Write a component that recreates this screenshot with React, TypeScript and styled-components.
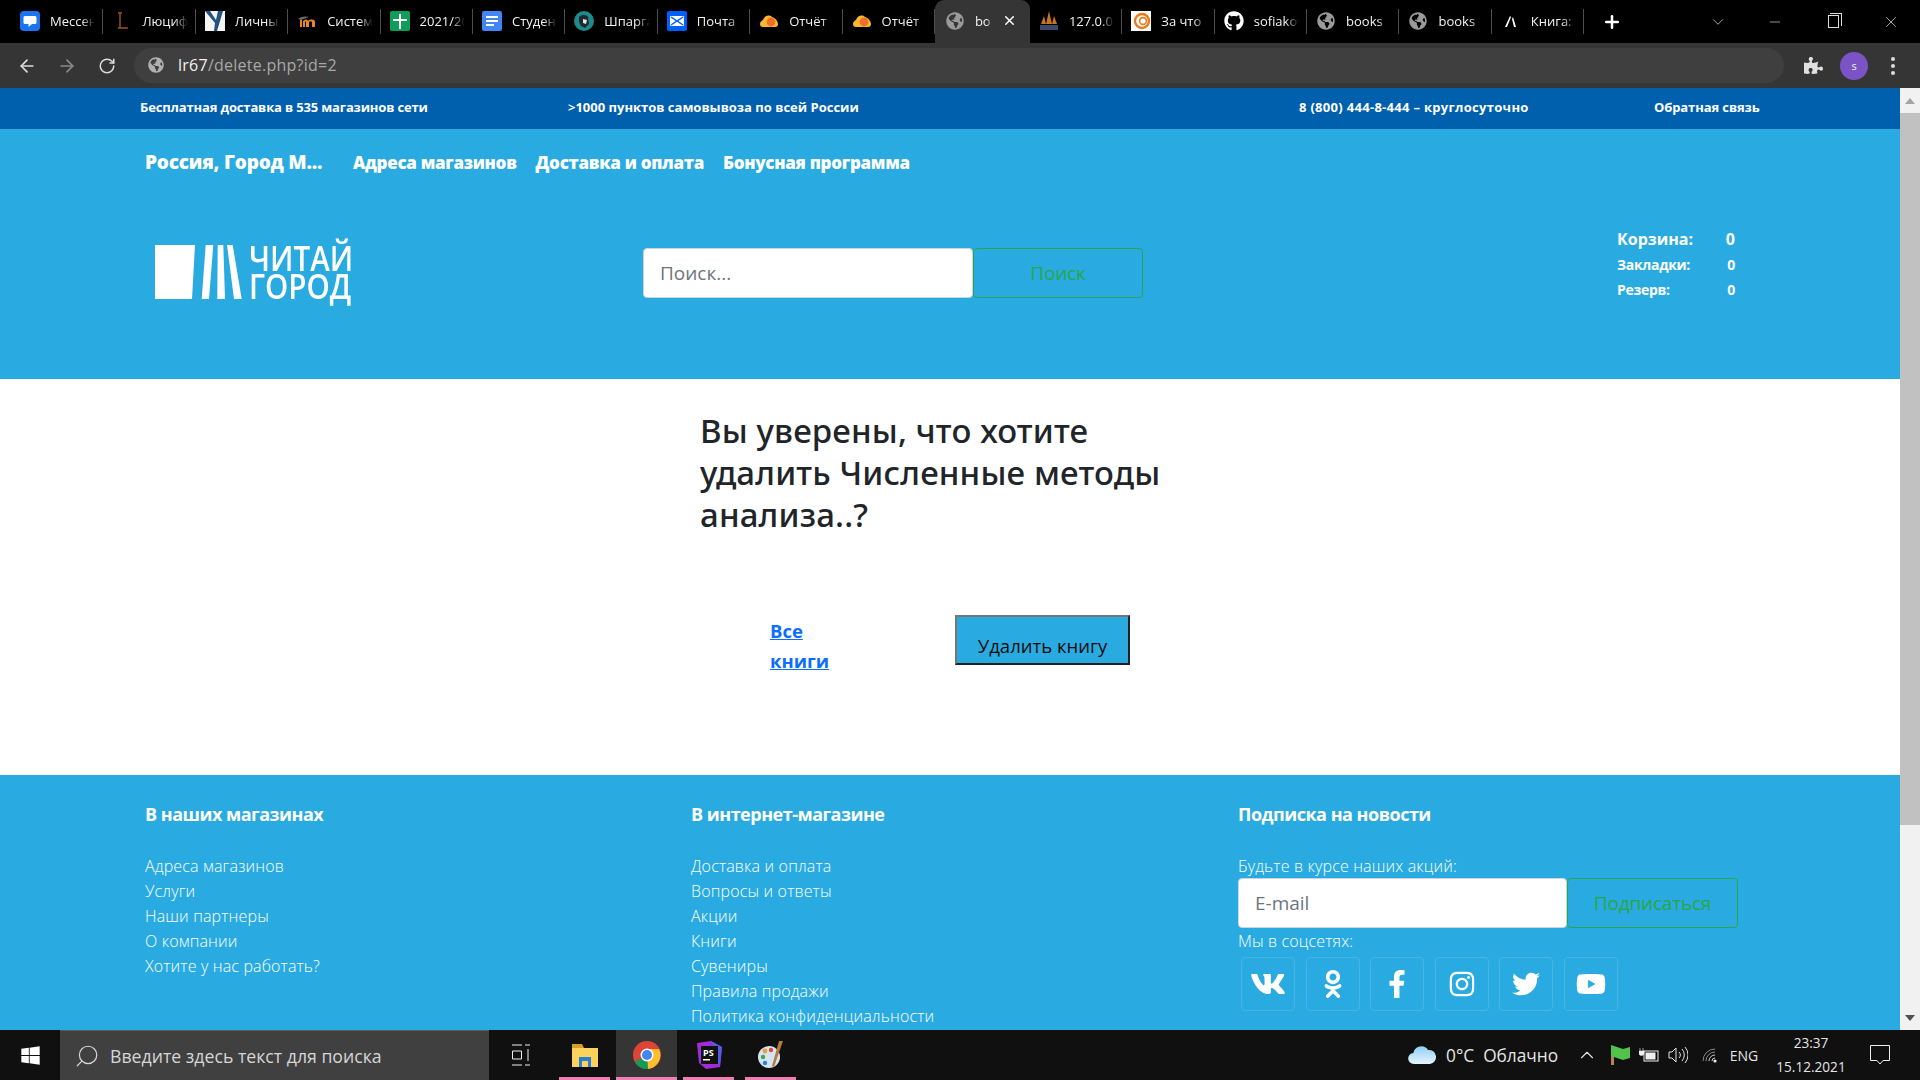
import React from 'react';
import styled, { createGlobalStyle } from 'styled-components';
import { FaVk, FaOdnoklassniki, FaFacebookF, FaInstagram, FaTwitter, FaYoutube, FaGithub, FaWindows, FaGlobeAmericas, FaPuzzlePiece } from 'react-icons/fa';
import { ArrowLeft, ArrowRight, RotateCw, Plus, X, ChevronDown, ChevronUp, Minus, Search } from 'lucide-react';

const GlobalStyle = createGlobalStyle`
  html, body { margin: 0; padding: 0; overflow: hidden; background: #fff; }
  * { box-sizing: border-box; }
  body { font-family: "Open Sans", "Noto Sans", sans-serif; }
`;

const Screen = styled.div`
  width: 1920px;
  height: 1080px;
  display: flex;
  flex-direction: column;
  overflow: hidden;
`;

/* chrome */
const TabStrip = styled.div`
  height: 43px;
  background: #000;
  display: flex;
  align-items: stretch;
  padding-left: 11px;
  color: #f2f2f2;
  flex: none;
`;

const Tab = styled.div<{ $active?: boolean }>`
  width: ${(p) => (p.$active ? '95px' : '92.4px')};
  display: flex;
  align-items: center;
  gap: 10px;
  padding: ${(p) => (p.$active ? '0 13px 2px 10px' : '0 8px 2px 9px')};
  font-size: 13px;
  background: ${(p) => (p.$active ? '#353535' : 'transparent')};
  border-radius: ${(p) => (p.$active ? '9px 9px 0 0' : '0')};
  position: relative;
  flex: none;
  &::after {
    content: '';
    display: ${(p) => (p.$active ? 'none' : 'block')};
    position: absolute;
    right: 0;
    top: 9px;
    bottom: 9px;
    width: 1px;
    background: #4d4d4d;
  }
`;

const TabIcon = styled.span`
  width: 20px;
  height: 20px;
  flex: none;
  display: flex;
  align-items: center;
  justify-content: center;
`;

const TabTitle = styled.span`
  flex: 1;
  white-space: nowrap;
  overflow: hidden;
  -webkit-mask-image: linear-gradient(90deg, #000 70%, transparent 100%);
  mask-image: linear-gradient(90deg, #000 70%, transparent 100%);
`;

const NewTab = styled.div`
  width: 56px;
  display: flex;
  align-items: center;
  justify-content: center;
  color: #fff;
  flex: none;
`;

const WindowControls = styled.div`
  margin-left: auto;
  display: flex;
  align-items: center;
  color: #ddd;
`;

const WindowButton = styled.div<{ $width: number }>`
  width: ${(p) => p.$width}px;
  display: flex;
  justify-content: center;
  align-items: center;
`;

const RestoreIcon = styled.div`
  width: 11px;
  height: 13px;
  border: 1px solid #ddd;
  position: relative;
  &::after {
    content: '';
    position: absolute;
    top: -3px;
    left: 1px;
    width: 11px;
    height: 12px;
    border: 1px solid #ddd;
    border-left: none;
    border-bottom: none;
  }
`;

const Toolbar = styled.div`
  height: 45px;
  background: #353535;
  display: flex;
  align-items: center;
  flex: none;
  padding-left: 7px;
  color: #dcdcdc;
`;

const NavButton = styled.div<{ $dim?: boolean }>`
  width: 40px;
  display: flex;
  justify-content: center;
  color: ${(p) => (p.$dim ? '#8a8a8a' : '#dcdcdc')};
`;

const AddressBar = styled.div`
  width: 1650px;
  height: 35px;
  margin-left: 7px;
  border-radius: 18px;
  background: #3f3f3f;
  display: flex;
  align-items: center;
  padding: 0 0 1px 14px;
  gap: 14px;
  font-size: 16px;
  letter-spacing: 0.25px;
  color: #a8a8a8;
  flex: none;
`;

const UrlHost = styled.span`
  color: #f0f0f0;
`;

const ToolbarEnd = styled.div`
  display: flex;
  align-items: center;
  margin-left: 20px;
`;

const Avatar = styled.div`
  width: 28px;
  height: 28px;
  border-radius: 50%;
  background: #7a54c4;
  color: #eee;
  font-size: 11px;
  display: flex;
  align-items: center;
  justify-content: center;
  margin-left: 17px;
`;

const Dots = styled.div`
  margin-left: 23px;
  width: 4px;
  display: flex;
  flex-direction: column;
  gap: 3px;
  span { width: 4px; height: 4px; border-radius: 50%; background: #ddd; }
`;

/* page */
const Viewport = styled.div`
  flex: 1;
  min-height: 0;
  display: flex;
`;

const Page = styled.div`
  width: 1900px;
  flex: none;
  overflow: hidden;
  display: flex;
  flex-direction: column;
`;

const Scrollbar = styled.div`
  width: 20px;
  background: #f1f1f1;
  display: flex;
  flex-direction: column;
  align-items: center;
`;

const ScrollArrow = styled.div<{ $down?: boolean }>`
  height: 25px;
  flex: none;
  display: flex;
  align-items: center;
  justify-content: center;
  &::before {
    content: '';
    border-left: 5px solid transparent;
    border-right: 5px solid transparent;
    ${(p) => (p.$down ? 'border-top: 6px solid #505050;' : 'border-bottom: 6px solid #a3a3a3;')}
  }
`;

const ScrollThumb = styled.div`
  width: 100%;
  height: 712px;
  background: #c1c1c1;
  flex: none;
`;

const ScrollTrack = styled.div`
  flex: 1;
`;

const PromoBar = styled.div`
  height: 41px;
  background: #0060ae;
  color: #fff;
  font-size: 13px;
  font-weight: 700;
  display: flex;
  align-items: center;
  padding: 0 0 4px 140px;
  flex: none;
`;

const PromoItem = styled.div<{ $width: number; $spacing: number }>`
  width: ${(p) => p.$width}px;
  letter-spacing: ${(p) => p.$spacing}px;
  flex: none;
  white-space: nowrap;
`;

const Header = styled.header`
  height: 250px;
  background: #29abe2;
  color: #fff;
  padding: 18px 0 0 145px;
  flex: none;
`;

const TopNav = styled.nav`
  display: flex;
  align-items: center;
  height: 30px;
  font-weight: 800;
  font-size: 17px;
  letter-spacing: -0.3px;
  white-space: nowrap;
`;

const City = styled.span`
  width: 208px;
  font-size: 19px;
  letter-spacing: -0.2px;
  flex: none;
`;

const TopLink = styled.a`
  color: #fff;
  margin-right: 19px;
`;

const HeaderRow = styled.div`
  display: flex;
  margin-top: 41px;
`;

const Logo = styled.div`
  width: 498px;
  margin-top: 26px;
  padding-left: 10px;
  display: flex;
  align-items: flex-start;
  gap: 7px;
  flex: none;
`;

const LogoBooks = styled.svg`
  width: 87px;
  height: 54px;
  margin-top: 1px;
  flex: none;
`;

const LogoText = styled.div`
  font-size: 34px;
  line-height: 28px;
  font-weight: 600;
  white-space: nowrap;
  transform: scaleX(0.87);
  transform-origin: left top;
`;

const SearchForm = styled.div`
  display: flex;
  margin-top: 30px;
  flex: none;
`;

const TextField = styled.input<{ $width: number }>`
  height: 50px;
  width: ${(p) => p.$width}px;
  border: 1px solid #ced4da;
  border-radius: 4px;
  padding: 0 16px;
  font-family: inherit;
  font-size: 19px;
  background: #fff;
  &::placeholder { color: #6c757d; opacity: 1; }
`;

const OutlineButton = styled.button<{ $width: number }>`
  height: 50px;
  width: ${(p) => p.$width}px;
  border: 1px solid #28a745;
  border-radius: 4px;
  background: transparent;
  color: #28a745;
  font-family: inherit;
  font-size: 19px;
  letter-spacing: -0.2px;
`;

const Counters = styled.div`
  margin: 8px 0 0 474px;
  width: 118px;
  flex: none;
  font-weight: 700;
`;

const CounterRow = styled.div<{ $large?: boolean }>`
  display: flex;
  justify-content: space-between;
  height: ${(p) => (p.$large ? '26px' : '25px')};
  align-items: center;
  font-size: ${(p) => (p.$large ? '16px' : '14px')};
  letter-spacing: ${(p) => (p.$large ? '0' : '-0.3px')};
`;

const Main = styled.main`
  height: 396px;
  background: #fff;
  padding: 31px 0 0 700px;
  flex: none;
`;

const Question = styled.h2`
  margin: 0;
  width: 480px;
  font-family: "Noto Sans", sans-serif;
  font-size: 33px;
  line-height: 42px;
  letter-spacing: 0.15px;
  font-weight: 500;
  color: #212529;
`;

const Actions = styled.div`
  display: flex;
  margin-top: 79px;
  padding-left: 70px;
`;

const BackLink = styled.a`
  width: 70px;
  margin-top: 1px;
  font-size: 18.5px;
  line-height: 30px;
  font-weight: 700;
  color: #0d6efd;
  text-decoration: underline;
  flex: none;
`;

const DeleteButton = styled.button`
  margin-left: 115px;
  width: 175px;
  height: 50px;
  padding: 11px 0 0;
  background: #29abe2;
  border: 2px solid;
  border-color: #767676 #212121 #212121 #767676;
  color: #0b0b0b;
  font-family: inherit;
  font-size: 18.5px;
`;

const Footer = styled.footer`
  flex: 1;
  background: #29abe2;
  color: #fff;
  padding: 26px 0 0 145px;
  display: flex;
`;

const FooterColumn = styled.div<{ $width?: number }>`
  width: ${(p) => p.$width ?? 546}px;
  flex: none;
`;

const FooterTitle = styled.div`
  font-size: 18px;
  line-height: 26px;
  font-weight: 700;
  letter-spacing: -0.5px;
  margin-bottom: 27px;
`;

const FooterLink = styled.div`
  font-size: 16px;
  line-height: 25px;
  font-weight: 300;
  letter-spacing: 0.16px;
  white-space: nowrap;
`;

const SubscribeLabel = styled(FooterLink)`
  line-height: 24px;
`;

const SocialLabel = styled(FooterLink)`
  padding-top: 1px;
`;

const SubscribeForm = styled.div`
  display: flex;
`;

const Socials = styled.div`
  display: flex;
  gap: 10.6px;
  margin: 3px 0 0 3px;
`;

const SocialTile = styled.div`
  width: 54px;
  height: 54px;
  border: 1px solid #45b5e6;
  border-radius: 4px;
  display: flex;
  align-items: center;
  justify-content: center;
  color: #fff;
`;

/* taskbar */
const Taskbar = styled.div`
  height: 50px;
  background: #101010;
  color: #e4e4e4;
  display: flex;
  align-items: stretch;
  flex: none;
`;

const StartButton = styled.div`
  width: 60px;
  display: flex;
  align-items: center;
  justify-content: center;
  color: #fff;
  font-size: 21px;
  flex: none;
`;

const TaskSearch = styled.div`
  width: 429px;
  background: #404040;
  border-top: 1px solid #5c5c5c;
  display: flex;
  align-items: center;
  gap: 10px;
  padding-left: 14px;
  font-size: 17.7px;
  color: #d6d6d6;
  flex: none;
`;

const TaskView = styled.div`
  width: 70px;
  padding-right: 6px;
  display: flex;
  align-items: center;
  justify-content: center;
  flex: none;
`;

const TaskApps = styled.div`
  display: flex;
  gap: 6px;
`;

const TaskApp = styled.div<{ $active?: boolean; $width?: number; $offset?: number }>`
  width: ${(p) => p.$width ?? 51}px;
  margin-left: ${(p) => p.$offset ?? 0}px;
  display: flex;
  align-items: center;
  justify-content: center;
  background: ${(p) => (p.$active ? '#353535' : 'transparent')};
  border-bottom: 3px solid #ee7fb0;
  padding-top: 3px;
  flex: none;
`;

const Tray = styled.div`
  margin-left: auto;
  padding-right: 21px;
  display: flex;
  align-items: center;
  font-size: 16px;
`;

const TrayItem = styled.span<{ $width: number }>`
  width: ${(p) => p.$width}px;
  display: flex;
  justify-content: center;
  align-items: center;
  flex: none;
`;

const Language = styled(TrayItem)`
  font-size: 14px;
`;

const Weather = styled.span`
  font-size: 17.3px;
  white-space: pre;
  width: 123px;
  margin-left: 10px;
  flex: none;
`;

const Clock = styled.div`
  width: 100px;
  text-align: center;
  font-size: 13.6px;
  line-height: 24px;
  flex: none;
`;

const SmallBadge = styled.svg`
  display: block;
`;

const MirroredSearch = styled(Search)`
  transform: scaleX(-1);
`;

const favicons: Record<string, React.ReactNode> = {
  chat: (
    <SmallBadge width="20" height="20" viewBox="0 0 20 20">
      <rect width="20" height="20" rx="4" fill="#1a73f0" />
      <path d="M5 5h10a1.5 1.5 0 0 1 1.5 1.5v5a1.5 1.5 0 0 1-1.5 1.5h-3l-3.5 3v-3H5a1.5 1.5 0 0 1-1.5-1.5v-5A1.5 1.5 0 0 1 5 5z" fill="#fff" />
    </SmallBadge>
  ),
  lucida: (
    <SmallBadge width="20" height="20" viewBox="0 0 20 20">
      <path d="M8 2v15h8M6 2h4M6 17h4" stroke="#9a5418" strokeWidth="1.4" fill="none" />
    </SmallBadge>
  ),
  personal: (
    <SmallBadge width="20" height="20" viewBox="0 0 20 20">
      <rect width="20" height="20" fill="#f4f6f4" />
      <path d="M0 0h5l6 9 2-9h5l-6 20H9l1-8z" fill="#24527e" />
    </SmallBadge>
  ),
  moodle: (
    <SmallBadge width="20" height="20" viewBox="0 0 20 20">
      <path d="M1 8c3-3 8-3 11-2l-8 3z" fill="#6a6a6a" />
      <path d="M3 16V9h2v7zM6 16v-6c2-2 4-2 5 0 2-2 7-2 7 1v5h-3v-5c-1-1-2-1-3 0v5H9v-5c-1-1-1-1-1 0v5z" fill="#e8862a" />
    </SmallBadge>
  ),
  sheets: (
    <SmallBadge width="20" height="20" viewBox="0 0 20 20">
      <rect width="20" height="20" rx="2" fill="#0f9d58" />
      <path d="M9 3h2v5h6v2h-6v8H9v-8H3V8h6z" fill="#fff" />
    </SmallBadge>
  ),
  docs: (
    <SmallBadge width="20" height="20" viewBox="0 0 20 20">
      <rect width="20" height="20" rx="2" fill="#4285f4" />
      <path d="M4 5h12v2H4zM4 9h12v2H4zM4 13h8v2H4z" fill="#fff" />
    </SmallBadge>
  ),
  cheat: (
    <SmallBadge width="20" height="20" viewBox="0 0 20 20">
      <circle cx="10" cy="10" r="10" fill="#1f8a8a" />
      <path d="M5 6c3-3 8-2 9 0l1 7-4 4-4-2-2-4z" fill="#1d2a30" />
      <path d="M9 8l4 1-1 4-3-1z" fill="#e6e6e6" />
    </SmallBadge>
  ),
  mail: (
    <SmallBadge width="20" height="20" viewBox="0 0 20 20">
      <rect width="20" height="20" rx="2" fill="#005ff9" />
      <rect x="3" y="5" width="14" height="10" rx="1" fill="#fff" />
      <path d="M4 6l6 4 6-4M4 14l6-4 6 4" stroke="#005ff9" strokeWidth="1.5" fill="none" />
    </SmallBadge>
  ),
  report: (
    <SmallBadge width="20" height="20" viewBox="0 0 20 20">
      <path d="M1 13c0-2 1-3 3-4 1-4 6-6 9-3 3 1 6 4 6 7 0 2-1 3-3 3H4c-2 0-3-1-3-3z" fill="#fbb731" />
      <circle cx="12" cy="11" r="4.4" fill="#f0702a" />
    </SmallBadge>
  ),
  globe: <FaGlobeAmericas size={18} color="#9a9a9a" />,
  mai: (
    <SmallBadge width="20" height="20" viewBox="0 0 20 20">
      <path d="M10 0l3 13H7zM5 5l2 8H2zM15 5l3 8h-5z" fill="#c9751f" />
      <rect x="1" y="14" width="18" height="5" fill="#3a4a6a" />
    </SmallBadge>
  ),
  why: (
    <SmallBadge width="20" height="20" viewBox="0 0 20 20">
      <rect width="20" height="20" fill="#fff" />
      <circle cx="11" cy="10" r="7" fill="none" stroke="#ec7a1c" strokeWidth="2.4" />
      <circle cx="12" cy="10" r="3.4" fill="none" stroke="#ec7a1c" strokeWidth="1.6" />
    </SmallBadge>
  ),
  github: <FaGithub size={20} color="#fff" />,
  book: (
    <SmallBadge width="20" height="20" viewBox="0 0 20 20">
      <path d="M4 16L9 5l1 1-4 10zM11 8l2 8h2l-3-10z" fill="#fff" />
    </SmallBadge>
  )
};

const tabs = [
  { icon: 'chat', title: 'Мессенджер' },
  { icon: 'lucida', title: 'Люцифер' },
  { icon: 'personal', title: 'Личный' },
  { icon: 'moodle', title: 'Система' },
  { icon: 'sheets', title: '2021/2022' },
  { icon: 'docs', title: 'Студенты' },
  { icon: 'cheat', title: 'Шпаргалка' },
  { icon: 'mail', title: 'Почта' },
  { icon: 'report', title: 'Отчёт' },
  { icon: 'report', title: 'Отчёт' }
];

const tabsAfter = [
  { icon: 'mai', title: '127.0.0.1' },
  { icon: 'why', title: 'За что' },
  { icon: 'github', title: 'sofiakov' },
  { icon: 'globe', title: 'books' },
  { icon: 'globe', title: 'books' },
  { icon: 'book', title: 'Книга:' }
];

const shopLinks = ['Адреса магазинов', 'Услуги', 'Наши партнеры', 'О компании', 'Хотите у нас работать?'];
const onlineLinks = ['Доставка и оплата', 'Вопросы и ответы', 'Акции', 'Книги', 'Сувениры', 'Правила продажи', 'Политика конфиденциальности'];
const socials = [
  { Icon: FaVk, size: 36 },
  { Icon: FaOdnoklassniki, size: 28 },
  { Icon: FaFacebookF, size: 28 },
  { Icon: FaInstagram, size: 28 },
  { Icon: FaTwitter, size: 28 },
  { Icon: FaYoutube, size: 30 }
];

export default function App() {
  return (
    <Screen>
      <GlobalStyle />
      <TabStrip>
        {tabs.map((tab, i) => (
          <Tab key={i}>
            <TabIcon>{favicons[tab.icon]}</TabIcon>
            <TabTitle>{tab.title}</TabTitle>
          </Tab>
        ))}
        <Tab $active>
          <TabIcon>{favicons.globe}</TabIcon>
          <TabTitle>bo</TabTitle>
          <X size={15} strokeWidth={2.4} color="#fff" />
        </Tab>
        {tabsAfter.map((tab, i) => (
          <Tab key={i}>
            <TabIcon>{favicons[tab.icon]}</TabIcon>
            <TabTitle>{tab.title}</TabTitle>
          </Tab>
        ))}
        <NewTab>
          <Plus size={20} strokeWidth={3} />
        </NewTab>
        <WindowControls>
          <WindowButton $width={57}>
            <ChevronDown size={18} strokeWidth={1} />
          </WindowButton>
          <WindowButton $width={58}>
            <Minus size={16} strokeWidth={1} />
          </WindowButton>
          <WindowButton $width={58}>
            <RestoreIcon />
          </WindowButton>
          <WindowButton $width={58}>
            <X size={18} strokeWidth={1} />
          </WindowButton>
        </WindowControls>
      </TabStrip>

      <Toolbar>
        <NavButton>
          <ArrowLeft size={20} />
        </NavButton>
        <NavButton $dim>
          <ArrowRight size={20} />
        </NavButton>
        <NavButton>
          <RotateCw size={18} />
        </NavButton>
        <AddressBar>
          <FaGlobeAmericas size={16} color="#b0b0b0" />
          <span>
            <UrlHost>lr67</UrlHost>/delete.php?id=2
          </span>
        </AddressBar>
        <ToolbarEnd>
          <FaPuzzlePiece size={19} color="#e0e0e0" />
          <Avatar>s</Avatar>
          <Dots>
            <span />
            <span />
            <span />
          </Dots>
        </ToolbarEnd>
      </Toolbar>

      <Viewport>
        <Page>
          <PromoBar>
            <PromoItem $width={428} $spacing={-0.15}>Бесплатная доставка в 535 магазинов сети</PromoItem>
            <PromoItem $width={731} $spacing={0}>&gt;1000 пунктов самовывоза по всей России</PromoItem>
            <PromoItem $width={355} $spacing={0.3}>8 (800) 444-8-444 – круглосуточно</PromoItem>
            <PromoItem $width={200} $spacing={-0.1}>Обратная связь</PromoItem>
          </PromoBar>

          <Header>
            <TopNav>
              <City>Россия, Город М...</City>
              <TopLink>Адреса магазинов</TopLink>
              <TopLink>Доставка и оплата</TopLink>
              <TopLink>Бонусная программа</TopLink>
            </TopNav>
            <HeaderRow>
              <Logo>
                <LogoBooks viewBox="0 0 87 54">
                  <path d="M0 0h40l-3 54H0zM50.7 0h7.6L54 54h-7.3zM62.7 0h5.6L70 54h-7.7zM72 0h5.7L86.7 54H79z" fill="#fff" />
                </LogoBooks>
                <LogoText>
                  ЧИТАЙ
                  <br />
                  ГОРОД
                </LogoText>
              </Logo>
              <SearchForm>
                <TextField $width={330} placeholder="Поиск..." />
                <OutlineButton $width={170}>Поиск</OutlineButton>
              </SearchForm>
              <Counters>
                <CounterRow $large>
                  <span>Корзина:</span>
                  <span>0</span>
                </CounterRow>
                <CounterRow>
                  <span>Закладки:</span>
                  <span>0</span>
                </CounterRow>
                <CounterRow>
                  <span>Резерв:</span>
                  <span>0</span>
                </CounterRow>
              </Counters>
            </HeaderRow>
          </Header>

          <Main>
            <Question>Вы уверены, что хотите удалить Численные методы анализа..?</Question>
            <Actions>
              <BackLink>Все книги</BackLink>
              <DeleteButton>Удалить книгу</DeleteButton>
            </Actions>
          </Main>

          <Footer>
            <FooterColumn>
              <FooterTitle>В наших магазинах</FooterTitle>
              {shopLinks.map((link) => (
                <FooterLink key={link}>{link}</FooterLink>
              ))}
            </FooterColumn>
            <FooterColumn $width={547}>
              <FooterTitle>В интернет-магазине</FooterTitle>
              {onlineLinks.map((link) => (
                <FooterLink key={link}>{link}</FooterLink>
              ))}
            </FooterColumn>
            <FooterColumn>
              <FooterTitle>Подписка на новости</FooterTitle>
              <SubscribeLabel>Будьте в курсе наших акций:</SubscribeLabel>
              <SubscribeForm>
                <TextField $width={329} placeholder="E-mail" />
                <OutlineButton $width={171}>Подписаться</OutlineButton>
              </SubscribeForm>
              <SocialLabel>Мы в соцсетях:</SocialLabel>
              <Socials>
                {socials.map(({ Icon, size }, i) => (
                  <SocialTile key={i}>
                    <Icon size={size} />
                  </SocialTile>
                ))}
              </Socials>
            </FooterColumn>
          </Footer>
        </Page>
        <Scrollbar>
          <ScrollArrow />
          <ScrollThumb />
          <ScrollTrack />
          <ScrollArrow $down />
        </Scrollbar>
      </Viewport>

      <Taskbar>
        <StartButton>
          <FaWindows />
        </StartButton>
        <TaskSearch>
          <MirroredSearch size={26} strokeWidth={1.1} />
          <span>Введите здесь текст для поиска</span>
        </TaskSearch>
        <TaskView>
          <SmallBadge width="20" height="22" viewBox="0 0 20 22">
            <path d="M1 1h10M1 21h10M1.5 7h9v8h-9zM14 1h5M14 21h5M17 5v12" stroke="#eee" fill="none" />
          </SmallBadge>
        </TaskView>
        <TaskApps>
          <TaskApp>
            <SmallBadge width="28" height="26" viewBox="0 0 28 26">
              <path d="M1 2h10l2 4H1z" fill="#d8a020" />
              <rect x="1" y="6" width="26" height="19" fill="#fbd35c" />
              <rect x="8" y="15" width="12" height="10" fill="#2a7fd5" />
              <rect x="11" y="19" width="6" height="6" fill="#fbd35c" />
            </SmallBadge>
          </TaskApp>
          <TaskApp $active $width={61}>
            <SmallBadge width="28" height="28" viewBox="0 0 28 28">
              <circle cx="14" cy="14" r="14" fill="#db4437" />
              <path d="M14 14L2 21A14 14 0 0 0 15 28z" fill="#0f9d58" />
              <path d="M14 8h12a14 14 0 0 1-11 20z" fill="#fbc02d" />
              <circle cx="14" cy="14" r="6.5" fill="#fff" />
              <circle cx="14" cy="14" r="5" fill="#4285f4" />
            </SmallBadge>
          </TaskApp>
          <TaskApp>
            <SmallBadge width="28" height="28" viewBox="0 0 28 28">
              <path d="M2 2l14-2 11 6-2 20-14 2-7-6z" fill="#a32cd8" />
              <path d="M16 0l11 6-2 20z" fill="#4f5de8" />
              <rect x="6" y="5" width="17" height="18" fill="#111" />
              <text x="8" y="15" fontSize="9" fontWeight="700" fontFamily="Open Sans" fill="#fff">PS</text>
              <rect x="8" y="18" width="7" height="1.5" fill="#fff" />
            </SmallBadge>
          </TaskApp>
          <TaskApp $offset={5}>
            <SmallBadge width="28" height="30" viewBox="0 0 28 30">
              <ellipse cx="12" cy="17" rx="11" ry="11" fill="#d5e4f2" />
              <circle cx="8" cy="11" r="2.4" fill="#e8a13a" />
              <circle cx="14" cy="10" r="2.2" fill="#d64a3a" />
              <circle cx="6" cy="17" r="2.2" fill="#4aa04a" />
              <circle cx="8" cy="23" r="2.2" fill="#2f7fd5" />
              <path d="M26 1l-9 26-2-1 7-25z" fill="#b27a3c" />
            </SmallBadge>
          </TaskApp>
        </TaskApps>
        <Tray>
          <SmallBadge width="28" height="20" viewBox="0 0 28 20">
            <defs>
              <linearGradient id="cloudFill" x1="0" y1="0" x2="0" y2="1">
                <stop offset="0" stopColor="#8fd0f7" />
                <stop offset="1" stopColor="#e6f5fe" />
              </linearGradient>
            </defs>
            <path d="M6 19a5.5 5.5 0 0 1-.6-11A8 8 0 0 1 20 5a6.5 6.5 0 0 1 2 14z" fill="url(#cloudFill)" />
          </SmallBadge>
          <Weather>0°C  Облачно</Weather>
          <TrayItem $width={36}>
            <ChevronUp size={22} strokeWidth={1.2} />
          </TrayItem>
          <TrayItem $width={30}>
            <SmallBadge width="19" height="20" viewBox="0 0 19 20">
              <rect x="0" y="4" width="3" height="16" fill="#b9824e" />
              <path d="M0 0l6 2 6 2 7-2v11l-7 2-12-4z" fill="#52c24a" />
            </SmallBadge>
          </TrayItem>
          <TrayItem $width={28}>
            <SmallBadge width="20" height="14" viewBox="0 0 20 14">
              <path d="M1 0v3M4 0v3M0 3h5v2a2 2 0 0 1-5 0z" fill="#eee" stroke="#eee" strokeWidth="0.6" />
              <rect x="5" y="3" width="14" height="10" fill="none" stroke="#eee" />
              <rect x="6.5" y="4.5" width="10" height="7" fill="#eee" />
            </SmallBadge>
          </TrayItem>
          <TrayItem $width={30}>
            <SmallBadge width="20" height="20" viewBox="0 0 20 20">
              <path d="M1 7h3l4-4v14l-4-4H1z" fill="none" stroke="#e4e4e4" />
              <path d="M11 7a4 4 0 0 1 0 6M14 4a9 9 0 0 1 0 12M17 2a12 12 0 0 1 0 16" fill="none" stroke="#e4e4e4" />
            </SmallBadge>
          </TrayItem>
          <TrayItem $width={34}>
            <SmallBadge width="16" height="15" viewBox="0 0 16 15">
              <path d="M1 13A12 12 0 0 1 13 1M4 13A9 9 0 0 1 13 4" fill="none" stroke="#8a8a8a" />
              <path d="M7 13a6 6 0 0 1 6-6M10 13a3 3 0 0 1 3-3" fill="none" stroke="#cfcfcf" />
              <circle cx="13" cy="13" r="1.6" fill="#eee" />
            </SmallBadge>
          </TrayItem>
          <Language $width={34}>ENG</Language>
          <Clock>
            <div>23:37</div>
            <div>15.12.2021</div>
          </Clock>
          <TrayItem $width={38}>
            <SmallBadge width="20" height="20" viewBox="0 0 20 20">
              <path d="M.5.5h19v15h-6.5L10 19l-3-3.500H.5z" fill="none" stroke="#eee" />
            </SmallBadge>
          </TrayItem>
        </Tray>
      </Taskbar>
    </Screen>
  );
}
